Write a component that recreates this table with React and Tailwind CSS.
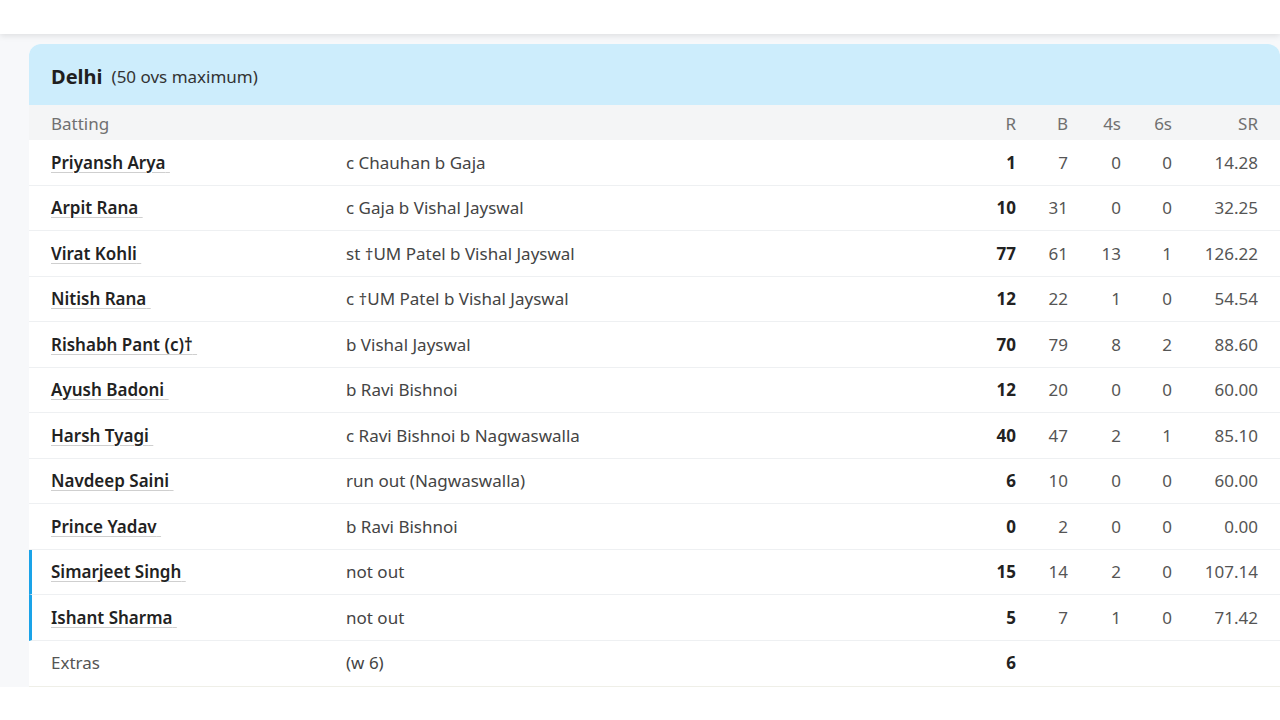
import React from "react";

const rows = [
  ["Priyansh Arya", "c Chauhan b Gaja", "1", "7", "0", "0", "14.28", false],
  ["Arpit Rana", "c Gaja b Vishal Jayswal", "10", "31", "0", "0", "32.25", false],
  ["Virat Kohli", "st \u2020UM Patel b Vishal Jayswal", "77", "61", "13", "1", "126.22", false],
  ["Nitish Rana", "c \u2020UM Patel b Vishal Jayswal", "12", "22", "1", "0", "54.54", false],
  ["Rishabh Pant (c)\u2020", "b Vishal Jayswal", "70", "79", "8", "2", "88.60", false],
  ["Ayush Badoni", "b Ravi Bishnoi", "12", "20", "0", "0", "60.00", false],
  ["Harsh Tyagi", "c Ravi Bishnoi b Nagwaswalla", "40", "47", "2", "1", "85.10", false],
  ["Navdeep Saini", "run out (Nagwaswalla)", "6", "10", "0", "0", "60.00", false],
  ["Prince Yadav", "b Ravi Bishnoi", "0", "2", "0", "0", "0.00", false],
  ["Simarjeet Singh", "not out", "15", "14", "2", "0", "107.14", true],
  ["Ishant Sharma", "not out", "5", "7", "1", "0", "71.42", true],
];

function Cells({ r, b, f, s, sr }) {
  return (
    <>
      <div className="w-[90px] text-right font-bold text-[#222]">{r}</div>
      <div className="w-[52px] text-right text-[#555]">{b}</div>
      <div className="w-[53px] text-right text-[#555]">{f}</div>
      <div className="w-[51px] text-right text-[#555]">{s}</div>
      <div className="w-[86px] text-right text-[#555]">{sr}</div>
    </>
  );
}

export default function App() {
  return (
    <div
      className="w-[1280px] h-[720px] bg-white overflow-hidden flex flex-col"
      style={{ fontFamily: '"Noto Sans", "Open Sans", sans-serif' }}
    >
      <div className="h-[34px] bg-white shrink-0 shadow-[0_2px_6px_rgba(0,0,0,0.10)] relative z-10" />
      <div className="bg-[#f7f8fa] pt-[10px] pl-[29px] shrink-0">
        <div className="bg-white rounded-t-[12px] overflow-hidden text-[17px]">
          <div className="h-[61px] bg-[#cdedfc] flex items-center pl-[22px] pt-[4px] gap-[9px]">
            <span className="text-[20px] font-bold text-[#1f1f1f]">Delhi</span>
            <span className="text-[17px] text-[#333]">(50 ovs maximum)</span>
          </div>
          <div className="h-[35px] bg-[#f4f5f6] flex items-center pl-[22px] pt-[2px] text-[#707070]">
            <div className="w-[295px]">Batting</div>
            <div className="flex-1" />
            <Cells r={<span className="font-normal text-[#707070]">R</span>} b={<span className="text-[#707070]">B</span>} f={<span className="text-[#707070]">4s</span>} s={<span className="text-[#707070]">6s</span>} sr={<span className="text-[#707070]">SR</span>} />
            <div className="w-[22px]" />
          </div>
          {rows.map(([name, how, r, b, f, s, sr, notOut]) => (
            <div
              key={name}
              className={`h-[45.5px] flex items-center border-b border-[#eef0f2] ${notOut ? "border-l-[3px] border-l-[#1aa3e8] pl-[19px]" : "pl-[22px]"}`}
            >
              <div className="w-[295px]">
                <span className="font-semibold text-[#222] underline decoration-[#cfcfcf] decoration-1 underline-offset-[3px]">
                  {name}{"\u00a0"}
                </span>
              </div>
              <div className="flex-1 text-[#444]">{how}</div>
              <Cells r={r} b={b} f={f} s={s} sr={sr} />
              <div className="w-[22px]" />
            </div>
          ))}
          <div className="h-[46px] flex items-center pl-[22px] border-b border-[#efefe8]">
            <div className="w-[295px] text-[#555]">Extras</div>
            <div className="flex-1 text-[#444]">(w 6)</div>
            <Cells r="6" b="" f="" s="" sr="" />
            <div className="w-[22px]" />
          </div>
        </div>
      </div>
      <div className="flex-1 bg-white" />
    </div>
  );
}
